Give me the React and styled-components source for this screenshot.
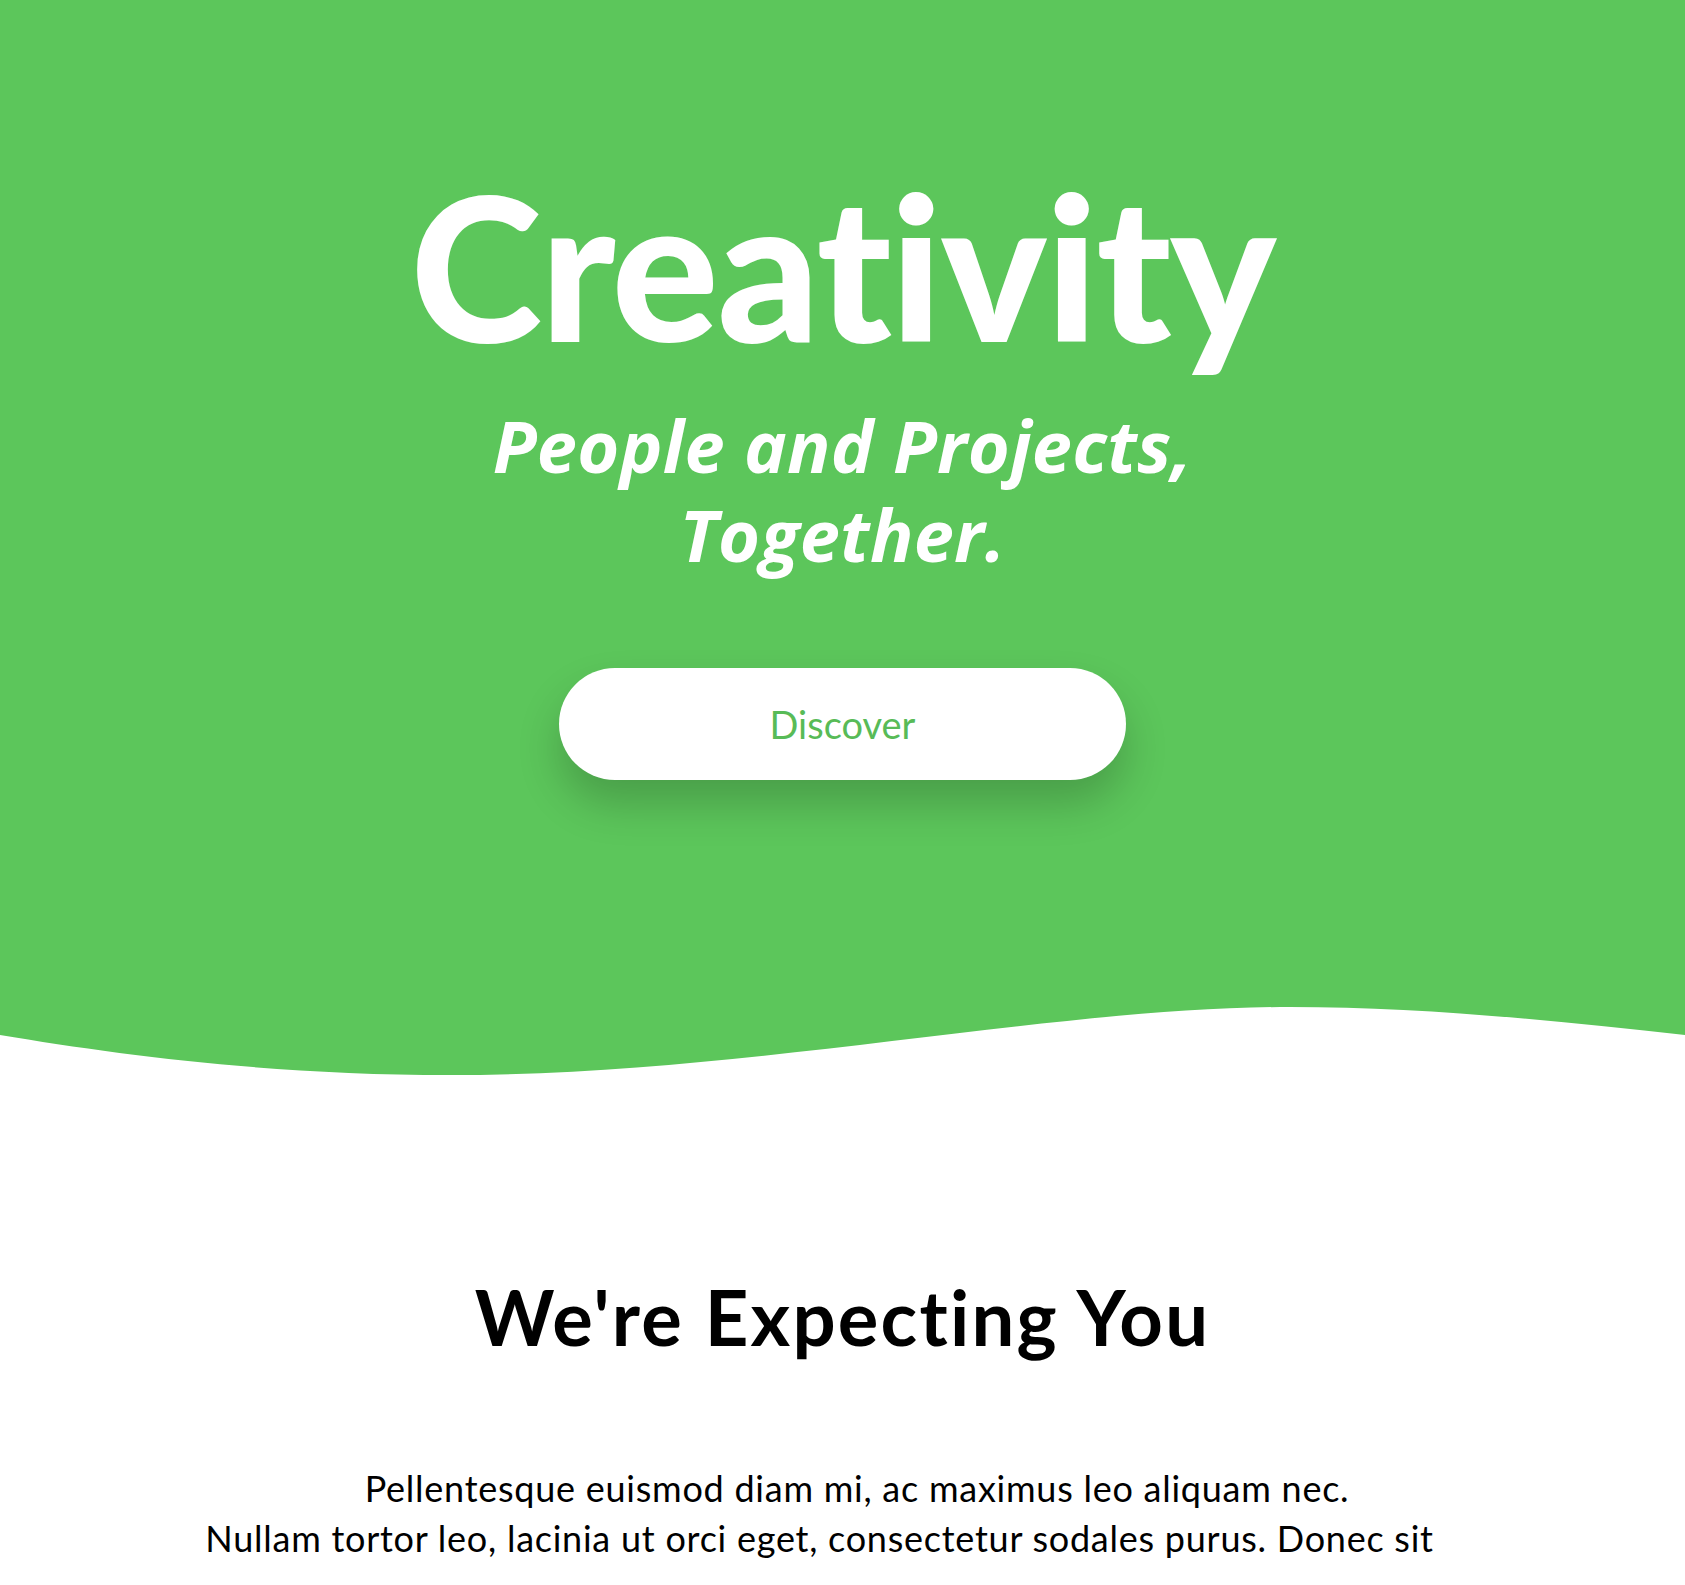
import styled, { createGlobalStyle } from 'styled-components';

const GREEN = '#5cc65b';

const GlobalStyle = createGlobalStyle`
  html, body {
    margin: 0;
    padding: 0;
    background: #ffffff;
  }
  body {
    font-family: Lato, "Open Sans", sans-serif;
    color: #000;
  }
`;

const App = () => {
  return (
    <>
      <GlobalStyle />
      <Page>
        <Hero>
          <HeroContent>
            <Title>Creativity</Title>
            <Subtitle>
              People and Projects,
              <br />
              Together.
            </Subtitle>
            <DiscoverButton type="button">Discover</DiscoverButton>
          </HeroContent>
          <Wave viewBox="0 0 1685 80" preserveAspectRatio="none">
            <path
              d="M0 0 H1685 V35 C1550 20 1420 7 1290 7 C1050 7 750 75 450 75 C270 75 120 55 0 35 Z"
              fill={GREEN}
            />
          </Wave>
        </Hero>
        <Intro>
          <Heading>We're Expecting You</Heading>
          <Text>
            Pellentesque euismod diam mi, ac maximus leo aliquam nec.
            <br />
            Nullam tortor leo, lacinia ut orci eget, consectetur sodales purus. Donec sit
          </Text>
        </Intro>
      </Page>
    </>
  );
};

const Page = styled.div`
  width: 100%;
  min-height: 1585px;
  overflow: hidden;
`;

const Hero = styled.section`
  background: ${GREEN};
  display: flex;
  flex-direction: column;
`;

const HeroContent = styled.div`
  display: flex;
  flex-direction: column;
  align-items: center;
  padding-top: 165px;
  padding-bottom: 220px;
  color: #fff;
  text-align: center;
`;

const Title = styled.h1`
  margin: 0;
  font-family: Lato, sans-serif;
  font-weight: 900;
  font-size: 200px;
  line-height: 1;
  letter-spacing: -1.6px;
`;

const Subtitle = styled.h2`
  margin: 36px 0 0;
  font-family: "Open Sans", Lato, sans-serif;
  font-style: italic;
  font-weight: 700;
  font-size: 72px;
  line-height: 89px;
  letter-spacing: 0.3px;
`;

const DiscoverButton = styled.button`
  margin-top: 89px;
  width: 567px;
  height: 112px;
  border: none;
  border-radius: 56px;
  background: #fff;
  color: #58bb57;
  font-family: Lato, sans-serif;
  font-size: 38px;
  font-weight: 400;
  cursor: pointer;
  box-shadow: 0 24px 44px rgba(0, 0, 0, 0.2);
`;

const Wave = styled.svg`
  display: block;
  width: 100%;
  height: 80px;
  background: #fff;
`;

const Intro = styled.section`
  display: flex;
  flex-direction: column;
  align-items: center;
  padding-top: 191px;
  text-align: center;
`;

const Heading = styled.h2`
  margin: 0;
  font-family: Lato, sans-serif;
  font-weight: 700;
  font-size: 76px;
  line-height: 1.2;
  letter-spacing: 2.2px;
  font-variant-ligatures: none;
`;

const Text = styled.p`
  margin: 101px 46px 0 0;
  width: 1262px;
  font-family: Lato, sans-serif;
  font-size: 36px;
  line-height: 50px;
  letter-spacing: 0.75px;
  text-indent: 75px;
`;

export default App;
